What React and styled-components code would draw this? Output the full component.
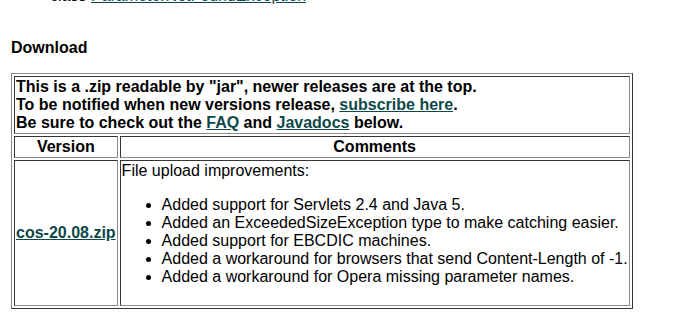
import React from 'react';
import styled, { createGlobalStyle } from 'styled-components';

const GlobalStyle = createGlobalStyle`
  html, body {
    margin: 0;
    padding: 0;
    background: #fff;
  }
  body {
    font-family: "Liberation Sans", Arial, sans-serif;
    font-size: 16px;
    color: #000;
  }
`;

const linkColor = '#0d4848';
const light = '#8a8a8a';
const dark = '#353535';

const Page = styled.div`
  padding: 0 10px;
  margin-top: -13px;
  overflow: hidden;
`;

const ClassList = styled.ul`
  margin: 0;
  padding-left: 40px;
  list-style: none;
  line-height: 18px;
`;

const Link = styled.a`
  color: ${linkColor};
  text-decoration: underline;
  font-weight: ${props => (props.bold ? 'bold' : 'inherit')};
`;

const Heading = styled.h4`
  margin: 34px 0 0 1px;
  font-size: 16px;
  line-height: 18px;
  font-weight: bold;
`;

const Table = styled.table`
  margin-top: 16px;
  margin-left: 1px;
  border-collapse: separate;
  border-spacing: 2px;
  border: 1px solid;
  border-color: ${light} ${dark} ${dark} ${light};
  font-size: 16px;
  line-height: 18px;
`;

const Cell = styled.td`
  padding: 1px;
  border: 1px solid;
  border-color: ${dark} ${light} ${light} ${dark};
  text-align: ${props => props.align || 'left'};
  vertical-align: ${props => props.valign || 'top'};
  font-weight: ${props => (props.bold ? 'bold' : 'normal')};
`;

const HeadCell = styled.th`
  padding: 1px;
  border: 1px solid;
  border-color: ${dark} ${light} ${light} ${dark};
  text-align: center;
  font-weight: bold;
`;

const Changes = styled.ul`
  margin: 16px 0 18px;
  padding-left: 40px;
  list-style: disc;
`;

const changes = [
  'Added support for Servlets 2.4 and Java 5.',
  'Added an ExceededSizeException type to make catching easier.',
  'Added support for EBCDIC machines.',
  'Added a workaround for browsers that send Content-Length of -1.',
  'Added a workaround for Opera missing parameter names.',
];

export default function App() {
  return (
    <>
      <GlobalStyle />
      <Page>
        <ClassList>
          <li>
            class <Link href="#">ParameterNotFoundException</Link>
          </li>
        </ClassList>

        <Heading>Download</Heading>

        <Table>
          <tbody>
            <tr>
              <Cell colSpan={2} bold>
                This is a .zip readable by "jar", newer releases are at the top.
                <br />
                To be notified when new versions release, <Link href="#">subscribe here</Link>.
                <br />
                Be sure to check out the <Link href="#">FAQ</Link> and{' '}
                <Link href="#">Javadocs</Link> below.
              </Cell>
            </tr>
            <tr>
              <HeadCell>Version</HeadCell>
              <HeadCell>Comments</HeadCell>
            </tr>
            <tr>
              <Cell valign="middle">
                <Link href="#" bold>cos-20.08.zip</Link>
              </Cell>
              <Cell>
                File upload improvements:
                <Changes>
                  {changes.map(c => (
                    <li key={c}>{c}</li>
                  ))}
                </Changes>
              </Cell>
            </tr>
          </tbody>
        </Table>
      </Page>
    </>
  );
}
